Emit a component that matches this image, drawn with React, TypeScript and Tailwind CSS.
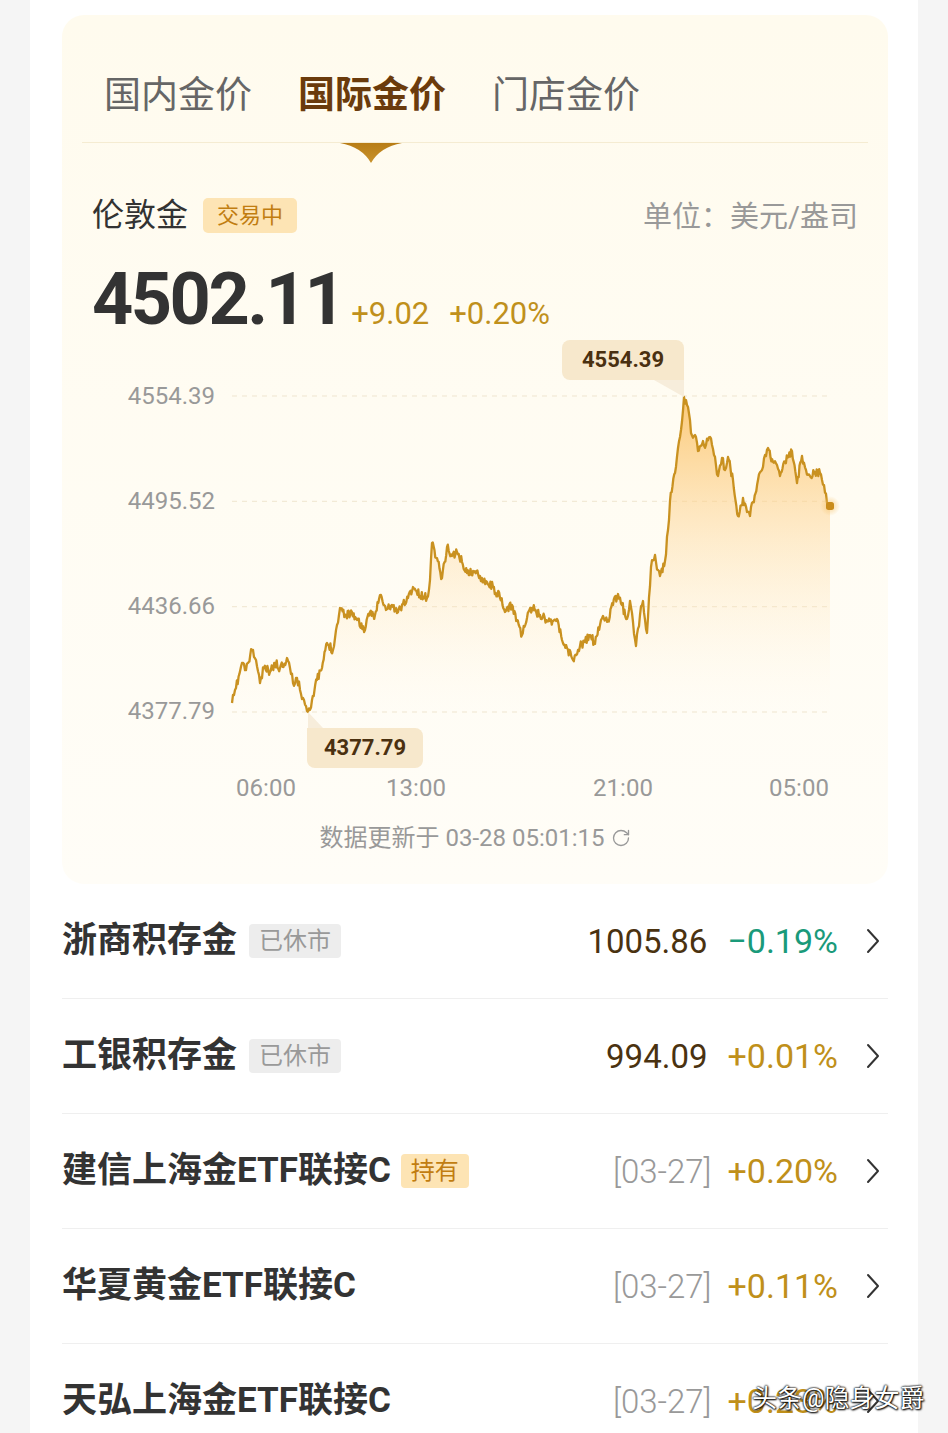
import { RotateCw } from "lucide-react";

const keys: [number, number][] = [
  [232, 703], [236, 688], [242, 663], [246, 670], [252, 650], [256, 660], [260, 683], [264, 668],
  [270, 672], [275, 663], [280, 668], [287, 658], [290, 668], [293, 683], [297, 678], [300, 690],
  [304, 700], [308, 712], [312, 700], [317, 680], [322, 668], [327, 643], [333, 650], [337, 625],
  [340, 608], [346, 615], [352, 612], [357, 620], [365, 630], [370, 612], [375, 615], [380, 595],
  [386, 610], [392, 605], [397, 613], [403, 604], [408, 598], [413, 587], [420, 596], [427, 598],
  [430, 580], [432, 543], [437, 558], [442, 578], [447, 547], [452, 556], [457, 552], [462, 562],
  [467, 573], [474, 572], [480, 576], [487, 582], [493, 587], [500, 598], [505, 612], [512, 605],
  [517, 620], [522, 635], [527, 618], [532, 608], [540, 615], [550, 621], [557, 619], [562, 640],
  [567, 648], [573, 660], [578, 650], [580, 646], [585, 642], [590, 635], [595, 644], [600, 625],
  [603, 616], [608, 620], [613, 605], [618, 594], [622, 605], [627, 619], [630, 601], [633, 622],
  [636, 646], [640, 615], [643, 601], [647, 633], [651, 567], [655, 555], [658, 570], [660, 576],
  [665, 561], [668, 530], [670, 501], [675, 473], [678, 448], [681, 430], [684, 397], [688, 407],
  [691, 433], [695, 435], [698, 451], [703, 441], [706, 445], [710, 437], [714, 455], [718, 476],
  [722, 458], [725, 470], [728, 457], [733, 480], [738, 516], [743, 498], [747, 512], [750, 516],
  [753, 502], [758, 480], [762, 470], [765, 455], [768, 448], [773, 462], [777, 465], [780, 476],
  [785, 462], [792, 451], [797, 483], [802, 456], [806, 470], [810, 476], [815, 472], [820, 473],
  [824, 485], [828, 505], [830, 506],
];

// jagged intraday line built from traced key points plus seeded noise
function buildSeries() {
  let seed = 11;
  const rnd = () => {
    seed = (seed * 16807) % 2147483647;
    return seed / 2147483647;
  };
  const pts: [number, number][] = [];
  for (let i = 0; i < keys.length - 1; i++) {
    const [x0, y0] = keys[i];
    const [x1, y1] = keys[i + 1];
    const steps = Math.max(1, Math.round((x1 - x0) / 0.9));
    for (let s = 0; s < steps; s++) {
      const t = s / steps;
      const j = s === 0 ? 0 : (rnd() - 0.5) * 9;
      const y = Math.min(711, Math.max(400, y0 + (y1 - y0) * t + j));
      pts.push([x0 + (x1 - x0) * t, s === 0 ? y0 : y]);
    }
  }
  pts.push(keys[keys.length - 1]);
  return pts;
}

const series = buildSeries();
const line = series.map(([x, y], i) => `${i ? "L" : "M"}${x.toFixed(1)},${y.toFixed(1)}`).join(" ");
const area = `${line} L830,712 L232,712 Z`;

const yLabels = ["4554.39", "4495.52", "4436.66", "4377.79"];
const gridY = [396, 501.3, 606.7, 712];

function Chevron() {
  return (
    <svg width="14" height="26" viewBox="0 0 14 26" fill="none">
      <path d="M2 2 L12 13 L2 24" stroke="#333" strokeWidth="2" strokeLinecap="round" strokeLinejoin="round" />
    </svg>
  );
}

type Row = {
  name: string;
  badge?: { text: string; kind: "closed" | "hold" };
  value?: string;
  date?: string;
  pct: string;
  up: boolean;
};

const rows: Row[] = [
  { name: "浙商积存金", badge: { text: "已休市", kind: "closed" }, value: "1005.86", pct: "−0.19%", up: false },
  { name: "工银积存金", badge: { text: "已休市", kind: "closed" }, value: "994.09", pct: "+0.01%", up: true },
  { name: "建信上海金ETF联接C", badge: { text: "持有", kind: "hold" }, date: "[03-27]", pct: "+0.20%", up: true },
  { name: "华夏黄金ETF联接C", date: "[03-27]", pct: "+0.11%", up: true },
  { name: "天弘上海金ETF联接C", date: "[03-27]", pct: "+0.23%", up: true },
];

function Card() {
  return (
    <section className="rounded-[22px] bg-gradient-to-b from-[#fffbee] to-[#fffdf7] pt-[57px] pb-[32px]">
      <div className="flex gap-[46px] pl-[42px] text-[37px] leading-[48px]">
        <span className="text-[#666]">国内金价</span>
        <span className="font-bold text-[#6b3b0c]">国际金价</span>
        <span className="text-[#666]">门店金价</span>
      </div>
      <div className="mx-[20px] mt-[22px] h-px bg-[#f5ecd2]" />
      <div className="pl-[278px]">
        <svg width="62" height="20" viewBox="0 0 62 20" className="block">
          <defs>
            <linearGradient id="tri" x1="0" y1="0" x2="0" y2="1">
              <stop offset="0" stopColor="#b87d16" />
              <stop offset="1" stopColor="#c8922c" />
            </linearGradient>
          </defs>
          <path d="M0 0 H62 Q40 4 31 20 Q22 4 0 0 Z" fill="url(#tri)" />
        </svg>
      </div>

      <div className="mt-[34px] flex h-[36px] items-center justify-between px-[30px]">
        <div className="flex items-center">
          <span className="text-[32px] leading-[36px] text-[#333]">伦敦金</span>
          <span className="ml-[15px] flex h-[35px] items-center rounded-[5px] bg-[#fde4b4] px-[14px] text-[22px] text-[#c17d11]">
            交易中
          </span>
        </div>
        <span className="mt-[6px] text-[29px] text-[#999]">单位：美元/盎司</span>
      </div>

      <div className="mt-[31px] flex items-baseline pl-[30px]">
        <span className="text-[72px] font-bold leading-[72px] tracking-[-2.5px] text-[#333]">4502.11</span>
        <span className="ml-[8px] text-[31px] text-[#c0901c]">+9.02</span>
        <span className="ml-[20px] text-[31px] text-[#c0901c]">+0.20%</span>
      </div>

      <div className="relative mt-[42px] flex">
        <div className="flex w-[153px] flex-col items-end gap-[81.3px] pt-[4px] text-[24px] leading-[24px] text-[#999]">
          {yLabels.map((l) => (
            <span key={l}>{l}</span>
          ))}
        </div>
        <svg width="600" height="340" viewBox="232 380 600 340" className="ml-[17px] overflow-visible">
          <defs>
            <linearGradient id="fill" gradientUnits="userSpaceOnUse" x1="0" y1="397" x2="0" y2="712">
              <stop offset="0" stopColor="#fbc164" stopOpacity="0.85" />
              <stop offset="0.45" stopColor="#fdd390" stopOpacity="0.4" />
              <stop offset="1" stopColor="#fff3dc" stopOpacity="0" />
            </linearGradient>
            <radialGradient id="glow">
              <stop offset="0" stopColor="#f5c26b" stopOpacity="0.7" />
              <stop offset="1" stopColor="#f5c26b" stopOpacity="0" />
            </radialGradient>
          </defs>
          {gridY.map((y) => (
            <line key={y} x1="232" x2="830" y1={y} y2={y} stroke="#efe5cf" strokeWidth="1" strokeDasharray="5 5" />
          ))}
          <path d={area} fill="url(#fill)" />
          <path d={line} fill="none" stroke="#c99120" strokeWidth="2.3" strokeLinejoin="round" />
          <circle cx="830" cy="506" r="10" fill="url(#glow)" />
          <rect x="826" y="502" width="8" height="8" rx="2.5" fill="#c98c1c" />
        </svg>

        <div className="absolute left-[500px] top-[-40px]">
          <div className="flex h-[40px] w-[122px] items-center justify-center rounded-[8px] rounded-br-none bg-[#f7e8cc] text-[22px] font-bold text-[#4a3010]">
            4554.39
          </div>
          <svg width="122" height="17" viewBox="0 0 122 17" className="block">
            <path d="M92 0 H122 V17 Z" fill="#f7eddb" />
          </svg>
        </div>
        <div className="absolute left-[245px] top-[332px]">
          <svg width="116" height="16" viewBox="0 0 116 16" className="block">
            <path d="M1 0 L16 16 H1 Z" fill="#f7eddb" />
          </svg>
          <div className="flex h-[40px] w-[116px] items-center justify-center rounded-[8px] rounded-tl-none bg-[#f7e8cc] text-[22px] font-bold text-[#4a3010]">
            4377.79
          </div>
        </div>
      </div>

      <div className="mt-[51px] flex pl-[174px] text-[24px] leading-[28px] text-[#999]">
        <span className="w-[60px] text-center">06:00</span>
        <span className="ml-[90px] w-[60px] text-center">13:00</span>
        <span className="ml-[147px] w-[60px] text-center">21:00</span>
        <span className="ml-[116px] w-[60px] text-center">05:00</span>
      </div>

      <div className="mt-[22px] flex items-center justify-center gap-[6px] text-[24px] leading-[28px] text-[#999]">
        <span>数据更新于 03-28 05:01:15</span>
        <RotateCw size={20} strokeWidth={1.6} className="text-[#999]" />
      </div>
    </section>
  );
}

function List() {
  return (
    <div>
      {rows.map((r) => (
        <div key={r.name} className="flex h-[115px] items-center border-b border-[#efefef]">
          <span className="text-[35px] font-bold leading-[40px] text-[#333]">{r.name}</span>
          {r.badge && (
            <span
              className={
                r.badge.kind === "closed"
                  ? "ml-[12px] flex h-[34px] items-center rounded-[4px] bg-[#ededed] px-[10px] text-[24px] text-[#999]"
                  : "ml-[10px] flex h-[34px] items-center rounded-[4px] bg-[#fde4b4] px-[10px] text-[24px] text-[#c17d11]"
              }
            >
              {r.badge.text}
            </span>
          )}
          <div className="flex-1" />
          {r.value && <span className="mr-[20px] text-[33px] text-[#4a3210]">{r.value}</span>}
          {r.date && <span className="mr-[16px] text-[33px] font-light text-[#999]">{r.date}</span>}
          <span className={r.up ? "text-[34px] text-[#c0901a]" : "text-[34px] text-[#1a9a7a]"}>{r.pct}</span>
          <span className="ml-[28px] mr-[8px] flex items-center">
            <Chevron />
          </span>
        </div>
      ))}
    </div>
  );
}

export default function App() {
  return (
    <div className="relative h-[1433px] overflow-hidden bg-[#f5f5f5] font-['Roboto','Noto_Sans_CJK_SC',sans-serif]">
      <div className="ml-[30px] h-full w-[888px] bg-white pl-[32px] pr-[30px] pt-[15px]">
        <Card />
        <List />
      </div>
      <div className="absolute left-[752px] top-[1383px] text-[25px] leading-[32px] text-white [text-shadow:0_0_2px_#000,0_0_2px_#000,1px_1px_2px_#000]">
        头条@隐身女爵
      </div>
    </div>
  );
}
